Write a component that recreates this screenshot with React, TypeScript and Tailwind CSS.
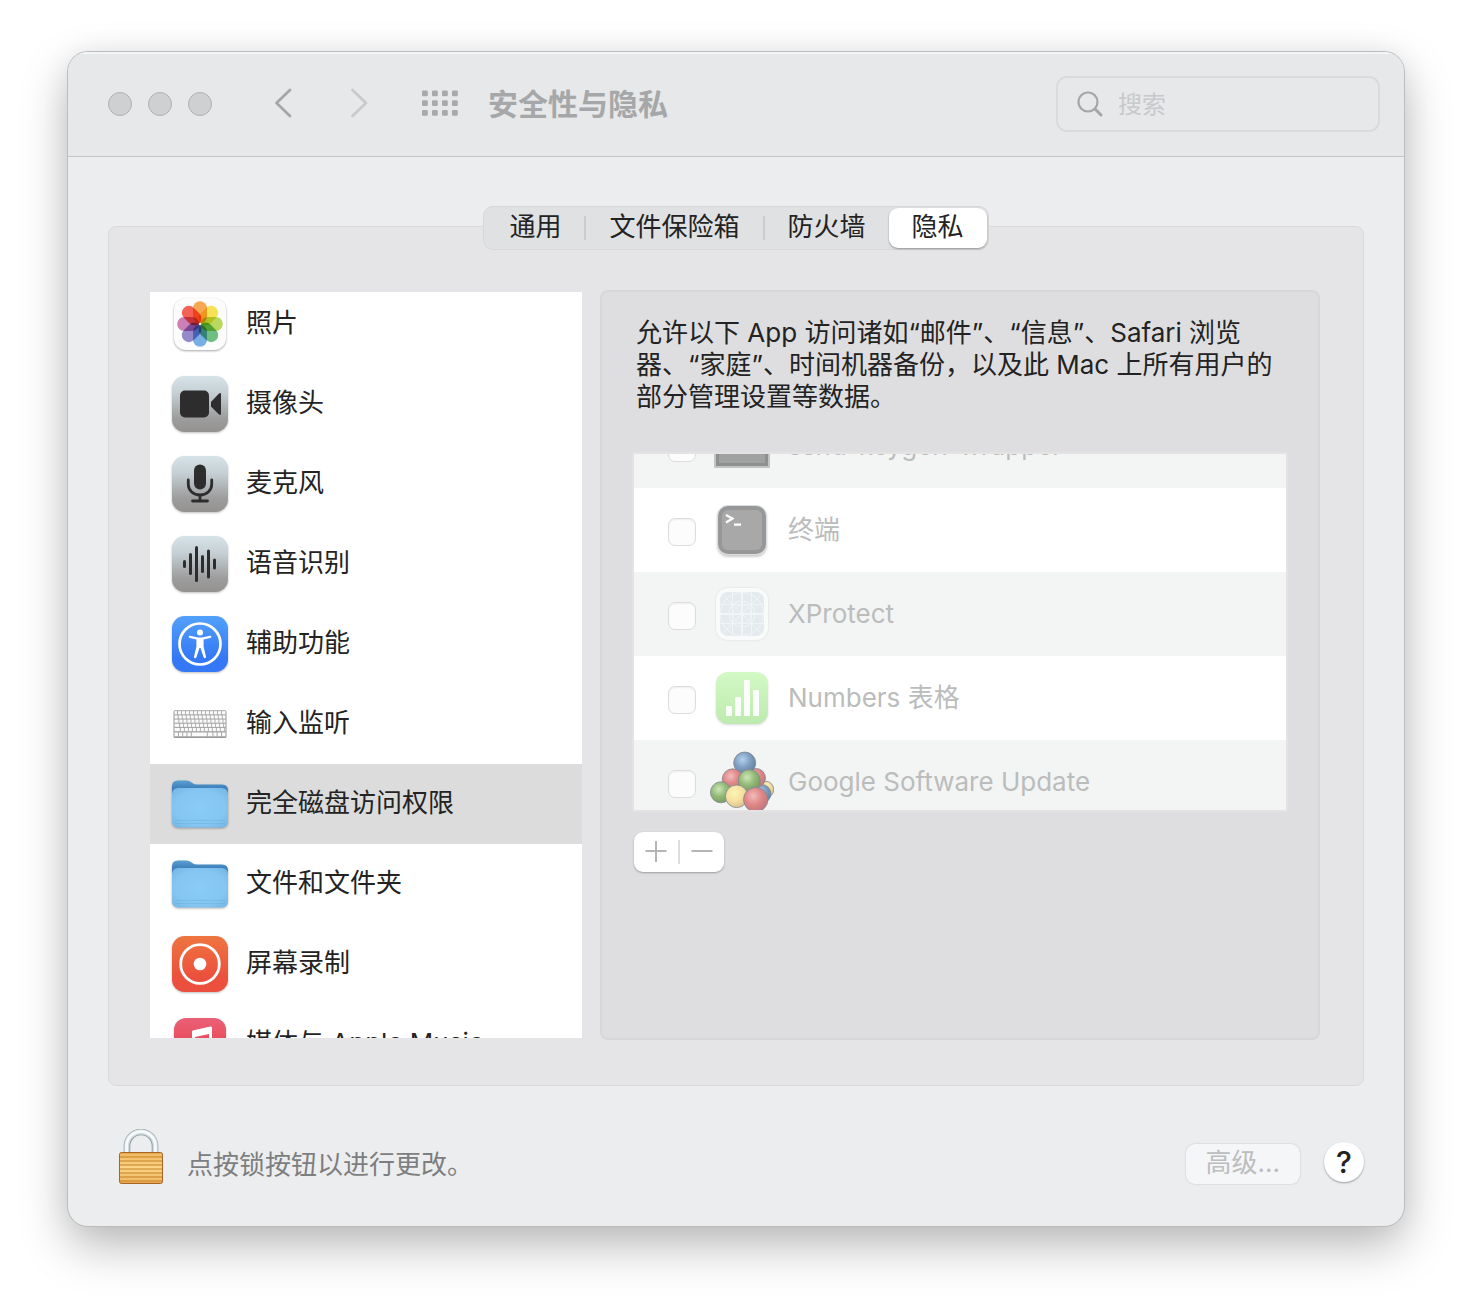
import type { ReactNode } from "react"
import clsx from "clsx"

const tabs = ["通用", "文件保险箱", "防火墙", "隐私"]

function Tile({ id, from, to, children }: { id: string; from: string; to: string; children: ReactNode }) {
  return (
    <svg viewBox="0 0 56 56" className="size-14 drop-shadow-[0_1px_1px_rgba(0,0,0,0.25)]" aria-hidden="true">
      <defs>
        <linearGradient id={id} x1="0" y1="0" x2="0" y2="1">
          <stop offset="0" stopColor={from} />
          <stop offset="0.75" stopColor={to} />
        </linearGradient>
      </defs>
      <rect width="56" height="56" rx="12.5" fill={`url(#${id})`} />
      {children}
    </svg>
  )
}

function GrayTile({ id, children }: { id: string; children: ReactNode }) {
  return (
    <svg viewBox="0 0 56 56" className="size-14 drop-shadow-[0_1px_1px_rgba(0,0,0,0.25)]" aria-hidden="true">
      <defs>
        <linearGradient id={id} x1="0" y1="0" x2="0" y2="1">
          <stop offset="0" stopColor="#d6e3e9" />
          <stop offset="0.3" stopColor="#c6d0d4" />
          <stop offset="0.75" stopColor="#9d9d9d" />
          <stop offset="1" stopColor="#949291" />
        </linearGradient>
      </defs>
      <rect width="56" height="56" rx="12.5" fill={`url(#${id})`} />
      {children}
    </svg>
  )
}

const petals = ["#f7952c", "#f3dc2f", "#a9cf3b", "#4fb066", "#5a9ce0", "#7f70be", "#c065a8", "#f0402f"]

function PhotosIcon() {
  return (
    <svg viewBox="0 0 56 56" className="size-14 drop-shadow-[0_1px_1px_rgba(0,0,0,0.35)]" aria-hidden="true">
      <rect x="2" y="2" width="52" height="52" rx="12" fill="#fcfcfc" />
      <g className="isolate">
        {petals.map((color, i) => (
          <rect
            key={color}
            x="21"
            y="5.2"
            width="14"
            height="22"
            rx="7"
            fill={color}
            fillOpacity="0.82"
            transform={`rotate(${i * 45} 28 28)`}
            className="mix-blend-multiply"
          />
        ))}
      </g>
      <circle cx="28" cy="28" r="1" fill="#fff" />
    </svg>
  )
}

function CameraIcon() {
  return (
    <GrayTile id="camera">
      <rect x="8" y="14.500" width="29" height="27" rx="5" fill="#2d2d2d" />
      <path d="M39 26 46.500 18Q49 16 49 18.500V37.500Q49 40 46.500 38L39 30.500Z" fill="#2d2d2d" />
    </GrayTile>
  )
}

function MicIcon() {
  return (
    <GrayTile id="mic">
      <rect x="22" y="8.500" width="12" height="25" rx="6" fill="#2d2d2d" />
      <path
        d="M16.300 24v4.500a11.700 10.500 0 0 0 23.400 0V24M28 39v6M20.500 45h15"
        fill="none"
        stroke="#2d2d2d"
        strokeWidth="2.8"
        strokeLinecap="round"
      />
    </GrayTile>
  )
}

const bars = [
  [12.5, 8],
  [18.5, 22],
  [24.5, 36],
  [30.5, 18],
  [36.5, 29],
  [42.5, 11],
]

function SpeechIcon() {
  return (
    <GrayTile id="speech">
      {bars.map(([x, h]) => (
        <rect key={x} x={x - 1.5} y={28 - h / 2} width="3" height={h} rx="1.5" fill="#2d2d2d" />
      ))}
    </GrayTile>
  )
}

function AccessibilityIcon() {
  return (
    <Tile id="access" from="#52a1f9" to="#3478f6">
      <circle cx="28" cy="28" r="20.5" fill="none" stroke="#fff" strokeWidth="2.7" />
      <circle cx="28" cy="16.500" r="3" fill="#fff" />
      <path
        d="M18 19.800 25 21.200Q28 21.700 31 21.200L38 19.800Q39.400 19.700 39.300 20.900 39.200 21.600 38.200 21.900L31.600 23.600V30.500L34 40.800Q34 42.300 32.800 42.300 32 42.300 31.600 41.300L28.500 32H27.500L24.400 41.300Q24 42.300 23.200 42.300 22 42.300 22 40.800L24.400 30.500V23.600L17.800 21.900Q16.800 21.600 16.700 20.900 16.600 19.700 18 19.800Z"
        fill="#fff"
      />
    </Tile>
  )
}

function KeyboardIcon() {
  const rows = [0, 1, 2, 3, 4]
  const keys = Array.from({ length: 12 }, (_, i) => i)
  return (
    <svg viewBox="0 0 56 56" className="size-14" aria-hidden="true">
      <rect x="1.500" y="14.500" width="53" height="27.500" rx="1.500" fill="#999999" />
      <rect x="2" y="14.500" width="52" height="26.500" rx="1" fill="#a8a8a8" />
      {rows.map((r) => (
        <g key={r} fill="#fafafa">
          <rect x="2.600" y={15.2 + r * 4.2} width={2.4 + r * 0.7} height="3.1" />
          {keys.map((k) => {
            const x = 6 + r * 0.7 + k * 4
            return <rect key={k} x={x} y={15.2 + r * 4.2} width={k === 11 ? 53.4 - x : 3.1} height="3.1" />
          })}
        </g>
      ))}
      <g fill="#fafafa">
        <rect x="2.600" y="36.500" width="3.400" height="3.700" />
        <rect x="7" y="36.500" width="3.200" height="3.700" />
        <rect x="11.200" y="36.500" width="3.200" height="3.700" />
        <rect x="15.400" y="36.500" width="3.400" height="3.700" />
        <rect x="19.800" y="36.500" width="15" height="3.700" />
        <rect x="35.800" y="36.500" width="4.600" height="3.700" />
        <rect x="41.400" y="36.500" width="3.200" height="3.700" />
        <rect x="45.600" y="36.500" width="3.400" height="3.700" />
        <rect x="50" y="36.500" width="3.400" height="3.700" />
      </g>
    </svg>
  )
}

function FolderIcon({ id }: { id: string }) {
  return (
    <svg viewBox="0 0 56 56" className="size-14 drop-shadow-[0_1px_1px_rgba(0,0,0,0.3)]" aria-hidden="true">
      <defs>
        <linearGradient id={id} x1="0" y1="0" x2="0" y2="1">
          <stop offset="0" stopColor="#5a9fd2" />
          <stop offset="0.35" stopColor="#3f80bb" />
        </linearGradient>
        <radialGradient id={`${id}-front`} cx="0.5" cy="0.5" r="0.65">
          <stop offset="0" stopColor="#8accf7" />
          <stop offset="0.7" stopColor="#84c5f2" />
          <stop offset="1" stopColor="#76b8e6" />
        </radialGradient>
      </defs>
      <path d="M0 10.500Q0 4.500 6 4.500H14Q17 4.500 19.500 6.500L21 7.500Q22.500 8.500 25 8.500H50Q56 8.500 56 14.500V26H0Z" fill={`url(#${id})`} />
      <rect y="12" width="56" height="39.500" rx="6" fill={`url(#${id}-front)`} />
      <path d="M3 44.500h50M2 47.500h52" stroke="#6fb2e0" strokeWidth="0.600" />
    </svg>
  )
}

function RecordIcon() {
  return (
    <Tile id="record" from="#ee7540" to="#eb4f3d">
      <circle cx="28" cy="28" r="19.300" fill="none" stroke="#fff" strokeWidth="2.800" />
      <circle cx="28" cy="28" r="6.300" fill="#fff" />
    </Tile>
  )
}

function MusicIcon() {
  return (
    <svg viewBox="0 0 56 56" className="size-14 drop-shadow-[0_1px_1px_rgba(0,0,0,0.25)]" aria-hidden="true">
      <defs>
        <linearGradient id="music" x1="0" y1="0" x2="0" y2="1">
          <stop offset="0" stopColor="#ea6076" />
          <stop offset="1" stopColor="#e8353f" />
        </linearGradient>
      </defs>
      <rect x="2" y="2" width="52" height="52" rx="12" fill="url(#music)" />
      <path
        d="M20 16Q20 14.500 21.500 14.200L38.500 10.600Q40 10.400 40 12V37A5 4 0 1 1 37 33V18L23 21V40A5 4 0 1 1 20 36Z"
        fill="#fff"
      />
    </svg>
  )
}

const categories = [
  { name: "照片", icon: <PhotosIcon /> },
  { name: "摄像头", icon: <CameraIcon /> },
  { name: "麦克风", icon: <MicIcon /> },
  { name: "语音识别", icon: <SpeechIcon /> },
  { name: "辅助功能", icon: <AccessibilityIcon /> },
  { name: "输入监听", icon: <KeyboardIcon /> },
  { name: "完全磁盘访问权限", icon: <FolderIcon id="disk" />, selected: true },
  { name: "文件和文件夹", icon: <FolderIcon id="files" /> },
  { name: "屏幕录制", icon: <RecordIcon /> },
  { name: "媒体与 Apple Music", icon: <MusicIcon /> },
]

function ExecIcon() {
  return (
    <svg viewBox="0 0 64 64" className="size-16" aria-hidden="true">
      <rect x="4" y="10" width="56" height="44" rx="1" fill="#c3c5c4" />
      <rect x="6" y="11" width="52" height="41" fill="#8e908f" />
      <rect x="9" y="14" width="46" height="35" fill="#a0a2a1" />
    </svg>
  )
}

function TerminalIcon() {
  return (
    <svg viewBox="0 0 64 64" className="size-16 drop-shadow-[0_2px_1px_rgba(0,0,0,0.2)]" aria-hidden="true">
      <rect x="7" y="7" width="50" height="50" rx="11" fill="#d9dee2" />
      <rect x="8" y="8" width="48" height="48" rx="10" fill="#979797" />
      <rect x="12" y="12" width="40" height="40" rx="6" fill="#a8a8a8" />
      <path d="M16 17l6.500 3.500L16 24.500M24 26.600h7" fill="none" stroke="#fff" strokeWidth="2.2" />
    </svg>
  )
}

function XProtectIcon() {
  return (
    <svg viewBox="0 0 64 64" className="size-16 drop-shadow-[0_0_1px_rgba(0,0,0,0.1)]" aria-hidden="true">
      <rect x="6" y="6" width="52" height="52" rx="12" fill="#f9fafa" />
      <rect x="10" y="10" width="44" height="44" rx="8" fill="#e4eaee" />
      <g fill="none" stroke="#f1f5f7" strokeWidth="0.9">
        <path d="M22.500 10v44M41.500 10v44M10 22.500h44M10 41.500h44M13 13l38 38M51 13 13 51" />
        <circle cx="32" cy="32" r="21.500" />
        <circle cx="32" cy="32" r="13" />
        <circle cx="32" cy="32" r="9" />
        <path d="M32 10v44M10 32h44" strokeWidth="2" />
      </g>
    </svg>
  )
}

function NumbersIcon() {
  return (
    <svg viewBox="0 0 64 64" className="size-16 drop-shadow-[0_1px_1px_rgba(0,0,0,0.15)]" aria-hidden="true">
      <defs>
        <linearGradient id="numbers" x1="0" y1="0" x2="0" y2="1">
          <stop offset="0" stopColor="#d3f9c4" />
          <stop offset="1" stopColor="#bdeab0" />
        </linearGradient>
      </defs>
      <rect x="6" y="6" width="52" height="52" rx="12" fill="url(#numbers)" />
      <g fill="#fbfdfb">
        <rect x="16" y="40" width="6" height="10" rx="1" />
        <rect x="25" y="31" width="6" height="19" rx="1" />
        <rect x="34" y="14" width="6" height="36" rx="1" />
        <rect x="43" y="24" width="6" height="26" rx="1" />
      </g>
    </svg>
  )
}

const ballColors = {
  blue: ["#b4d2ef", "#7f9fc2", "#6683a2"],
  red: ["#f3bcbc", "#e08686", "#c07a7d"],
  green: ["#cfe6b9", "#92ba77", "#7c9d66"],
  yellow: ["#fbf4b5", "#f6e2a0", "#dcc48f"],
}

const balls: [keyof typeof ballColors, number, number, number][] = [
  ["yellow", 55.5, 39.5, 8.3],
  ["blue", 51.7, 43.8, 9.3],
  ["red", 46, 28, 9.5],
  ["blue", 34.7, 13, 11],
  ["red", 22.7, 29.3, 10.5],
  ["green", 39.3, 30.6, 11],
  ["green", 10.9, 42.3, 10.5],
  ["yellow", 26.7, 46.3, 11.3],
  ["red", 45.7, 49.6, 12.2],
]

function GoogleUpdateIcon() {
  return (
    <svg viewBox="0 0 64 64" className="size-16" aria-hidden="true">
      <defs>
        {Object.entries(ballColors).map(([name, [light, mid, dark]]) => (
          <radialGradient key={name} id={`ball-${name}`} cx="0.4" cy="0.35" r="0.65">
            <stop offset="0" stopColor={light} />
            <stop offset="0.55" stopColor={mid} />
            <stop offset="1" stopColor={dark} />
          </radialGradient>
        ))}
      </defs>
      {balls.map(([color, x, y, r]) => (
        <circle key={`${x}-${y}`} cx={x} cy={y} r={r} fill={`url(#ball-${color})`} stroke="#7f8791" strokeWidth="0.8" />
      ))}
    </svg>
  )
}

const apps = [
  { name: "sshd-keygen-wrapper", icon: <ExecIcon /> },
  { name: "终端", icon: <TerminalIcon /> },
  { name: "XProtect", icon: <XProtectIcon /> },
  { name: "Numbers 表格", icon: <NumbersIcon /> },
  { name: "Google Software Update", icon: <GoogleUpdateIcon /> },
]

function LockIcon() {
  return (
    <svg viewBox="0 0 44 56" className="h-14 w-11" aria-hidden="true">
      <defs>
        <linearGradient id="brass" x1="0" y1="0" x2="0" y2="1">
          <stop offset="0" stopColor="#e9a847" />
          <stop offset="0.5" stopColor="#f9cf7c" />
          <stop offset="1" stopColor="#e8a549" />
        </linearGradient>
      </defs>
      <path d="M8 25V17a14 14 0 0 1 28 0v8" fill="none" stroke="#8f9ba1" strokeWidth="6.600" />
      <path d="M7.800 25V17a14.200 14.200 0 0 1 28.400 0v8" fill="none" stroke="#cfd9dd" strokeWidth="5.200" />
      <path d="M7.600 25V17a14.400 14.400 0 0 1 28.800 0v8" fill="none" stroke="#f7fafb" strokeWidth="2.800" />
      <rect x="0.500" y="23.500" width="43" height="31" rx="2" fill="url(#brass)" stroke="#a4642a" />
      <path d="M1 28h42M1 32h42M1 36h42M1 40h42M1 44h42M1 48h42M1 52h42" stroke="#c98a34" strokeWidth="1.200" />
      <path d="M1 26h42M1 30h42M1 34h42M1 38h42M1 42h42M1 46h42M1 50h42" stroke="#fce0a0" strokeOpacity="0.6" />
    </svg>
  )
}

function Toolbar() {
  return (
    <header className="flex items-center h-[105px] pl-10 pr-6 bg-[#e7e8ea] border-b border-[#c5c6c8] shadow-[inset_0_2px_0_#f4f5f6]">
      <div className="flex gap-4">
        <button aria-label="关闭" className="size-6 rounded-full bg-[#cfd0d2] border border-[#b0b1b3]" />
        <button aria-label="最小化" className="size-6 rounded-full bg-[#cfd0d2] border border-[#b0b1b3]" />
        <button aria-label="缩放" className="size-6 rounded-full bg-[#cfd0d2] border border-[#b0b1b3]" />
      </div>
      <button aria-label="后退" className="ml-15 mb-0.5">
        <svg viewBox="0 0 24 32" className="w-6 h-8" fill="none" stroke="#a5a6a8" strokeWidth="2.8" strokeLinecap="round" strokeLinejoin="round">
          <path d="M18 3 4.500 16 18 29" />
        </svg>
      </button>
      <button aria-label="前进" disabled className="ml-13 mb-0.5">
        <svg viewBox="0 0 24 32" className="w-6 h-8" fill="none" stroke="#c9cacc" strokeWidth="2.8" strokeLinecap="round" strokeLinejoin="round">
          <path d="M4.500 3 18 16 4.500 29" />
        </svg>
      </button>
      <button aria-label="显示全部" className="ml-[50px] mb-0.5">
        <svg viewBox="0 0 36 26" className="w-9 h-[26px]" fill="#a8a9ab">
          {[0.5, 10.3, 20].map((y) =>
            [0, 10, 20, 30].map((x) => <rect key={`${x}-${y}`} x={x} y={y} width="5.800" height="5.800" rx="1.300" />)
          )}
        </svg>
      </button>
      <h1 className="ml-[30px] text-[30px] leading-10 font-bold text-[#a6a7a9]">安全性与隐私</h1>
      <label className="ml-auto flex items-center gap-3.5 w-[324px] h-14 px-[18px] rounded-[11px] border-2 border-[#dadbdd]">
        <svg viewBox="0 0 28 28" className="size-7 shrink-0" fill="none" stroke="#a5a6a8" strokeLinecap="round">
          <circle cx="12" cy="12" r="9.500" strokeWidth="2.200" />
          <path d="m19 19 6 6" strokeWidth="3" />
        </svg>
        <input
          type="search"
          placeholder="搜索"
          aria-label="搜索"
          className="min-w-0 flex-1 pt-0.5 bg-transparent text-[24px] outline-none placeholder:text-[#c8c9cb]"
        />
      </label>
    </header>
  )
}

function Tabs() {
  return (
    <nav className="relative z-10 flex h-11 p-px pl-0.5 rounded-[10px] bg-[#e0e1e3] border border-[#d6d7d9]">
      {tabs.map((tab, i) => (
        <div key={tab} className="flex items-center">
          <button
            className={clsx(
              "h-10 px-[23px] pb-0.5 rounded-[9px] text-[26px] leading-9 text-[#232323]",
              tab === "隐私" && "bg-white shadow-[0_1px_2px_rgba(0,0,0,0.35)]"
            )}
          >
            {tab}
          </button>
          {i < 2 && <span className="w-0.5 h-6 bg-[#cbccce]" />}
        </div>
      ))}
    </nav>
  )
}

function Sidebar() {
  return (
    <div className="my-0.5 h-[746px] overflow-hidden bg-white">
      <ul className="-mt-2">
        {categories.map((c) => (
          <li key={c.name}>
            <button
              className={clsx(
                "flex items-center gap-[18px] w-full h-20 pl-[22px] text-left text-[26px] leading-9 text-[#232323]",
                c.selected && "bg-[#dcdcdc]"
              )}
            >
              {c.icon}
              <span className="pb-0.5 whitespace-nowrap">{c.name}</span>
            </button>
          </li>
        ))}
      </ul>
    </div>
  )
}

function Permissions() {
  return (
    <section className="px-[30px] pt-[25px] pb-6 rounded-lg bg-[#dedee0] border-2 border-[#d7d7d9]">
      <p className="px-1 text-[26px] leading-8 text-[#232323] whitespace-nowrap">
        允许以下 App 访问诸如“邮件”、“信息”、Safari 浏览
        <br />
        器、“家庭”、时间机器备份，以及此 Mac 上所有用户的
        <br />
        部分管理设置等数据。
      </p>
      <div className="mt-[39px] h-[360px] overflow-hidden bg-white border-2 border-[#e3e3e4]">
        <ul className="-mt-[50px]">
          {apps.map((app) => (
            <li key={app.name} className="odd:bg-[#f3f5f4]">
              <label className="flex items-center h-21 pl-[34px] text-[26px] leading-9 text-[#bbbcbc]">
                <input
                  type="checkbox"
                  disabled
                  className="appearance-none size-7 mt-1 rounded-[7px] bg-[#fcfcfc] border border-[#dcdddd] shadow-[inset_0_1px_2px_rgba(0,0,0,0.06)]"
                />
                <span className="mx-3.5">{app.icon}</span>
                {app.name}
              </label>
            </li>
          ))}
        </ul>
      </div>
      <div className="mt-5 ml-0.5 inline-flex items-center h-10 rounded-[9px] bg-white shadow-[0_1px_2px_rgba(0,0,0,0.3)]">
        <button aria-label="添加" disabled className="w-11 flex justify-center">
          <svg viewBox="0 0 22 22" className="size-[22px]" stroke="#b5b5b5" strokeWidth="2">
            <path d="M11 0v21M0.500 10h21" />
          </svg>
        </button>
        <span className="w-0.5 h-6 bg-[#dddddd]" />
        <button aria-label="移除" disabled className="w-11 flex justify-center">
          <svg viewBox="0 0 22 22" className="size-[22px]" stroke="#b5b5b5" strokeWidth="2">
            <path d="M0.500 10h21" />
          </svg>
        </button>
      </div>
    </section>
  )
}

export default function App() {
  return (
    <div className="min-h-screen px-[68px] pt-[52px] pb-[84px] bg-white font-['Inter','Noto_Sans_CJK_SC',sans-serif]">
      <div className="overflow-hidden rounded-[20px] bg-[#ecedef] shadow-[0_0_0_1px_#bbbcbe,0_20px_48px_rgba(0,0,0,0.27),0_0_30px_rgba(0,0,0,0.06)]">
        <Toolbar />

        <main className="flex flex-col items-center px-10 pt-[49px]">
          <Tabs />
          <div className="-mt-6 w-full grid grid-cols-[432px_1fr] gap-[18px] pt-[63px] pb-[45px] pl-[41px] pr-[43px] rounded-lg bg-[#e5e5e7] border border-[#d9dadc]">
            <Sidebar />
            <Permissions />
          </div>
        </main>

        <footer className="flex items-end px-10 pt-[43px] pb-[41px]">
          <button aria-label="解锁" className="ml-[11px]">
            <LockIcon />
          </button>
          <p className="ml-6 text-[26px] leading-10 text-[#7d7e80]">点按锁按钮以进行更改。</p>
          <button disabled className="ml-auto mb-px h-10 px-5 pb-0.5 rounded-[9px] bg-[#f5f6f8] text-[26px] leading-9 text-[#bcbdbf] shadow-[0_0_2px_rgba(0,0,0,0.2)]">
            高级...
          </button>
          <button aria-label="帮助" className="ml-6 mb-[3px] size-10 rounded-full bg-white text-[30px] leading-10 font-medium text-[#232323] shadow-[0_1px_2px_rgba(0,0,0,0.35)]">
            ?
          </button>
        </footer>
      </div>
    </div>
  )
}
